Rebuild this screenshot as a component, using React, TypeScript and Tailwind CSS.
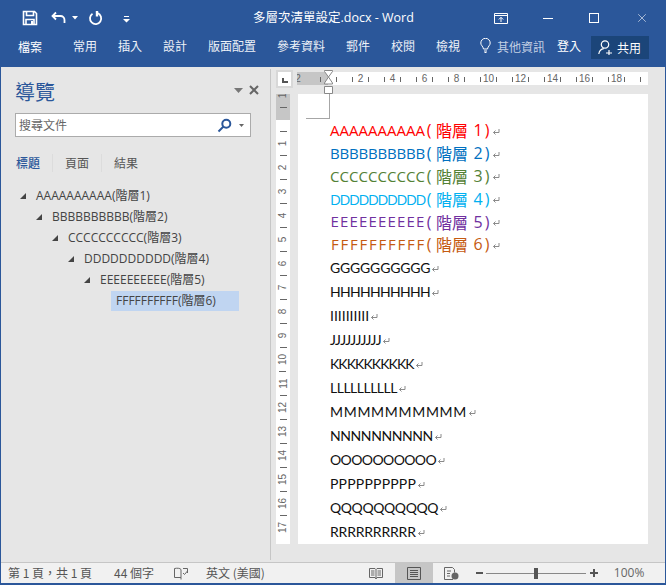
import { X } from "lucide-react";

const cjk = { fontFamily: '"Noto Sans CJK TC", "Noto Sans", sans-serif' };
const openSans = { fontFamily: '"Open Sans", "Noto Sans CJK TC", sans-serif' };
const rulerFont = { fontFamily: '"Liberation Sans", sans-serif' };

const tabs = [
  { label: "常用", w: "w-[45px]" },
  { label: "插入", w: "w-[45px]" },
  { label: "設計", w: "w-[45px]" },
  { label: "版面配置", w: "w-[69px]" },
  { label: "參考資料", w: "w-[69px]" },
  { label: "郵件", w: "w-[45px]" },
  { label: "校閱", w: "w-[45px]" },
  { label: "檢視", w: "w-[44px]" },
];

const tree = [
  { text: "AAAAAAAAAA(階層1)", pl: "pl-[19px]" },
  { text: "BBBBBBBBBB(階層2)", pl: "pl-[35px]" },
  { text: "CCCCCCCCCC(階層3)", pl: "pl-[51px]" },
  { text: "DDDDDDDDDD(階層4)", pl: "pl-[67px]" },
  { text: "EEEEEEEEEE(階層5)", pl: "pl-[83px]" },
];

const headings = [
  { text: "AAAAAAAAAA", n: "1", color: "text-[#ff0000]" },
  { text: "BBBBBBBBBB", n: "2", color: "text-[#0070c0]" },
  { text: "CCCCCCCCCC", n: "3", color: "text-[#538135]" },
  { text: "DDDDDDDDDD", n: "4", color: "text-[#00b0f0]" },
  { text: "EEEEEEEEEE", n: "5", color: "text-[#7030a0]" },
  { text: "FFFFFFFFFF", n: "6", color: "text-[#c55a11]" },
];

// Lato stands in for Calibri, so each line gets its own tracking
const body = [
  { text: "GGGGGGGGGG", track: "tracking-[-0.2px]" },
  { text: "HHHHHHHHHH", track: "tracking-[-0.7px]" },
  { text: "IIIIIIIIII", track: "tracking-[0px]" },
  { text: "JJJJJJJJJJ", track: "tracking-[-0.6px]" },
  { text: "KKKKKKKKKK", track: "tracking-[-0.9px]" },
  { text: "LLLLLLLLLL", track: "tracking-[-0.5px]" },
  { text: "MMMMMMMMMM", track: "tracking-[0.7px]" },
  { text: "NNNNNNNNNN", track: "tracking-[-0.4px]" },
  { text: "OOOOOOOOOO", track: "tracking-[-0.6px]" },
  { text: "PPPPPPPPPP", track: "tracking-[0.2px]" },
  { text: "QQQQQQQQQQ", track: "tracking-[-0.4px]" },
  { text: "RRRRRRRRRR", track: "tracking-[-0.2px]" },
];

const hLabels = ["2", "4", "6", "8", "10", "12", "14", "16", "18"];
const vLabels = ["", "1", "2", "3", "4", "5", "6", "7", "8", "9", "10", "11", "12", "13", "14", "15", "16", "17"];

function Arrow() {
  return (
    <svg width="8" height="8" viewBox="0 0 8 8" className="ml-[1px] mt-[3px] shrink-0" fill="none" stroke="#8a8a8a" strokeWidth="1">
      <path d="M7 1v3.500H1.500M3.500 2.500l-2 2 2 2" />
    </svg>
  );
}

function Heading({ text, n, color }: { text: string; n: string; color: string }) {
  return (
    <div className={`flex h-[22.8px] items-center text-[15px] ${color}`}>
      {text.split("").map((c, i) => (
        <span key={i} className="inline-block w-[9.5px] text-center" style={{ fontFamily: '"Open Sans", sans-serif' }}>
          {c}
        </span>
      ))}
      <span className="w-[8px] text-center text-[16px]">(</span>
      <span className="ml-[3px] text-[16px]" style={cjk}>階層</span>
      <span className="ml-[5px] w-[10px] text-center text-[16px]">{n}</span>
      <span className="w-[8px] text-center text-[16px]">)</span>
      <Arrow />
    </div>
  );
}

export default function App() {
  return (
    <div
      className="flex h-[585px] w-[666px] flex-col overflow-hidden border-x border-b-2 border-[#2b579a] bg-[#e6e6e6] text-[#444]"
      style={openSans}
    >
      {/* Title bar */}
      <div className="relative flex h-[36px] shrink-0 items-center bg-[#2b579a] text-white">
        <svg width="16" height="16" viewBox="0 0 16 16" className="ml-[21px]" fill="none" stroke="#fff" strokeWidth="1.6">
          <path d="M1.500 1.500h11l2 2v11h-13zM4.500 1.500v4h7v-4M4 14.500v-5h8v5" />
          <path d="M9 11h2v3.500H9z" fill="#fff" stroke="none" />
        </svg>
        <svg width="16" height="14" viewBox="0 0 16 14" className="ml-[13px]" fill="none" stroke="#fff" strokeWidth="1.8">
          <path d="M5 1.500 1.500 5 5 8.500M1.500 5h8a4 4 0 0 1 4 4v3" />
        </svg>
        <svg width="6" height="4" viewBox="0 0 6 4" className="ml-[5px]"><path d="M0 0h6L3 3.500z" fill="#fff" /></svg>
        <svg width="15" height="15" viewBox="0 0 15 15" className="ml-[10px]" fill="none" stroke="#fff" strokeWidth="1.8">
          <path d="M9.500 2.200a5.600 5.600 0 1 1-5 .6" />
          <path d="M9 0v5.500" strokeWidth="2.400" />
        </svg>
        <svg width="7" height="7" viewBox="0 0 7 7" className="ml-[20px] mt-[3px]" fill="#fff">
          <path d="M1 0h5v1H1zM0 3h7L3.500 6.500z" />
        </svg>
        <span className="absolute left-[252px] top-[9px] text-[12.5px] leading-[18px]">
          多層次清單設定.docx - Word
        </span>
        <div className="ml-auto flex items-center">
          <svg width="14" height="11" viewBox="0 0 14 11" className="mr-[35px]" fill="none" stroke="#fff">
            <path d="M.5.500h13v10H.5zM.5 2.500h13M7 9V4.500M4.800 6.500 7 4.300l2.200 2.200" />
          </svg>
          <span className="mr-[36px] h-px w-[10px] bg-white" />
          <span className="mr-[36px] h-[10px] w-[10px] border border-white" />
          <X size={14} strokeWidth={1} className="mr-[16px]" />
        </div>
      </div>

      {/* Ribbon tabs */}
      <div className="flex h-[31px] shrink-0 items-start bg-[#2b579a] text-[12px] text-white" style={cjk}>
        <span className="ml-[17px] mt-[2px] w-[55px] leading-[18px]">檔案</span>
        {tabs.map((t) => (
          <span key={t.label} className={`${t.w} mt-[1px] leading-[18px] text-[#eef2f8]`}>{t.label}</span>
        ))}
        <svg width="11" height="15" viewBox="0 0 11 15" className="mt-[2px]" fill="none" stroke="#fff">
          <path d="M3.500 11C3 8 .8 7.500.8 5a4.700 4.700 0 0 1 9.400 0c0 2.500-2.200 3-2.700 6zM4 13h3M4.500 14.500h2" />
        </svg>
        <span className="ml-[6px] mt-[2px] w-[60px] leading-[18px] text-[#c3d0e4]">其他資訊</span>
        <span className="mt-[1px] w-[34px] leading-[18px]">登入</span>
        <div className="flex h-[23px] w-[58px] items-center bg-[#1b4579] pl-[7px]">
          <svg width="15" height="15" viewBox="0 0 15 15" fill="none" stroke="#fff" strokeWidth="1.2">
            <circle cx="7" cy="4.500" r="3.700" />
            <path d="M.8 14c.5-3 2.500-5 5-5.300M8 13h6M11 10v5" />
          </svg>
          <span className="ml-[4px] leading-[18px]">共用</span>
        </div>
      </div>

      <div className="flex min-h-0 flex-1">
        {/* Navigation pane */}
        <div className="flex w-[269px] shrink-0 flex-col" style={cjk}>
          <div className="flex h-[46px] items-center pl-[14px] pr-[11px] pt-[4px]">
            <span className="text-[20px] leading-[28px] text-[#2b579a]">導覽</span>
            <svg width="9" height="5" viewBox="0 0 9 5" className="ml-auto mb-[4px]"><path d="M0 0h9L4.500 5z" fill="#777" /></svg>
            <svg width="10" height="10" viewBox="0 0 10 10" className="ml-[6px] mb-[4px]" stroke="#666" strokeWidth="2">
              <path d="M1 1l8 8M9 1l-8 8" />
            </svg>
          </div>
          <div className="ml-[14px] flex h-[24px] w-[236px] items-center border border-[#ababab] bg-white pl-[3px] pr-[6px]">
            <span className="text-[12px] text-[#666]">搜尋文件</span>
            <svg width="15" height="15" viewBox="0 0 15 15" className="ml-auto" fill="none" stroke="#2b579a" strokeWidth="2">
              <circle cx="9.300" cy="5.700" r="4" />
              <path d="M6.500 8.500 1.500 13.500" />
            </svg>
            <svg width="5" height="3" viewBox="0 0 5 3" className="ml-[7px]"><path d="M0 0h5L2.500 3z" fill="#666" /></svg>
          </div>
          <div className="mt-[16px] flex h-[20px] items-center pl-[15px] text-[12px] text-[#555]">
            <span className="w-[37px] border-r border-[#dcdcdc] font-medium text-[#2b579a]">標題</span>
            <span className="ml-[12px] w-[37px] border-r border-[#dcdcdc]">頁面</span>
            <span className="ml-[12px]">結果</span>
          </div>
          <div className="mt-[12px] flex flex-col">
            {tree.map((t) => (
              <div key={t.text} className={`flex h-[21px] items-center ${t.pl}`}>
                <svg width="6" height="6" viewBox="0 0 6 6"><path d="M6 0v6H0z" fill="#444" /></svg>
                <span className="ml-[10px] text-[12px]" style={openSans}>{t.text}</span>
              </div>
            ))}
            <div className="ml-[110px] mt-[1px] flex h-[20px] w-[128px] items-center bg-[#c0d5f1] pl-[5px]">
              <span className="text-[12px]" style={openSans}>FFFFFFFFFF(階層6)</span>
            </div>
          </div>
        </div>

        {/* Document area */}
        <div className="relative my-[2px] flex min-w-0 flex-1 border-l border-[#c6c6c6]">
          <div className="flex flex-1 flex-col pl-[5px]">
            {/* Corner + horizontal ruler */}
            <div className="flex h-[25px] shrink-0">
              <div className="mt-[1px] flex h-[18px] w-[17px] shrink-0 items-center justify-center border-2 border-[#d8d8d8] bg-white">
                <span className="mt-[2px] h-[5px] w-[6px] border-b-2 border-l-2 border-[#555]" />
              </div>
              <div className="ml-[4px] mt-[3px] flex h-[13px] w-[351px] overflow-hidden bg-[linear-gradient(90deg,#c6c6c6_31px,#fff_31px)]">
                <span className="-ml-[2px] w-[6px] shrink-0 text-center text-[10px] leading-[13px] text-[#666]" style={rulerFont}>2</span>
                <span className="ml-[19px] mt-[5px] h-[5px] w-px shrink-0 bg-[#666]" />
                <span className="w-[15px] shrink-0" />
                <span className="mt-[5px] h-[5px] w-px shrink-0 bg-[#666]" />
                <span className="w-[15px] shrink-0" />
                {hLabels.map((l) => (
                  <div key={l} className="flex w-[32px] shrink-0 items-start">
                    <span className="mt-[5px] h-[5px] w-px shrink-0 bg-[#666]" />
                    <span className="w-[15px] shrink-0 text-center text-[10px] leading-[13px] text-[#666]" style={rulerFont}>
                      {l}
                    </span>
                    <span className="mt-[5px] h-[5px] w-px shrink-0 bg-[#666]" />
                  </div>
                ))}
                <span className="mt-[5px] h-[5px] w-px shrink-0 bg-[#666]" />
              </div>
            </div>
            <div className="flex min-h-0 flex-1">
              {/* Vertical ruler */}
              <div className="mb-[16px] flex w-[14px] shrink-0 flex-col items-center overflow-hidden bg-[linear-gradient(#c6c6c6_26px,#fff_26px)]">
                <div className="h-[13px] shrink-0">
                  <span className="flex h-[13px] -translate-y-[5px] -rotate-90 items-center text-[10px] leading-none text-[#666]" style={rulerFont}>1</span>
                </div>
                {vLabels.map((l, i) => (
                  <div key={i} className="flex h-[24px] shrink-0 flex-col items-center">
                    <span className="h-px w-[7px] shrink-0 bg-[#666]" />
                    <span className="flex h-[23px] -rotate-90 items-center whitespace-nowrap text-[10px] leading-none text-[#666]" style={rulerFont}>
                      {l}
                    </span>
                  </div>
                ))}
              </div>
              {/* Page */}
              <div className="mb-[16px] ml-[8px] w-[350px] shrink-0 bg-white">
                <div className="ml-[8px] h-[25px] w-[24px] border-b border-r border-[#a6a6a6]" />
                <div className="pl-[32px]">
                  {headings.map((h) => (
                    <Heading key={h.text} {...h} />
                  ))}
                  <div className="text-[14px] text-[#111]">
                    {body.map((t) => (
                      <div key={t.text} className={`flex h-[24px] items-center ${t.track}`} style={{ fontFamily: '"Lato", sans-serif' }}>
                        {t.text}
                        <Arrow />
                      </div>
                    ))}
                  </div>
                </div>
              </div>
            </div>
          </div>
          {/* Indent markers on the ruler */}
          <svg width="9" height="24" viewBox="0 0 9 24" className="absolute left-[53px] top-[1px]" fill="#fff" stroke="#888">
            <path d="M.5.500h8v1L4.500 7 .5 1.500zM4.500 7l4 6v1h-8v-1zM.5 16.500h8v7h-8z" />
          </svg>
        </div>
      </div>

      {/* Status bar */}
      <div className="flex h-[21px] shrink-0 items-center border-t border-[#c6c6c6] bg-[#f1f1f1] text-[12px] text-[#555]" style={cjk}>
        <span className="ml-[7px] w-[106px]">第 1 頁，共 1 頁</span>
        <span className="w-[60px]">44 個字</span>
        <svg width="14" height="13" viewBox="0 0 14 13" fill="none" stroke="#666">
          <path d="M7 2.500C6 1 3 1 .5 1.500v9H7v2M7 2.500V10.500M9 1.500h4.500V6M9 6l1.500 1.500L13.500 4" />
        </svg>
        <span className="ml-[18px]">英文 (美國)</span>
        <svg width="14" height="13" viewBox="0 0 14 13" className="ml-[104px]" fill="none" stroke="#666">
          <path d="M.5 1.500h5.500l1 1 1-1h5.500v9H8l-1 1.500L6 10.500H.5zM7 2.500v9M2 4h3.500M2 6h3.500M2 8h3.500M8.500 4H12M8.500 6H12M8.500 8H12" />
        </svg>
        <div className="ml-[12px] flex h-full w-[38px] items-center justify-center bg-[#c6c6c6]">
          <svg width="14" height="13" viewBox="0 0 14 13" fill="none" stroke="#555">
            <path d="M.5.500h13v12H.5zM3 3.500h8M3 5.500h8M3 7.500h8M3 9.500h8" />
          </svg>
        </div>
        <svg width="15" height="13" viewBox="0 0 15 13" className="ml-[11px]" fill="none" stroke="#666">
          <path d="M9 12.500H.5V.500h8l2 2v3M3 4h4M3 6.500h3M3 9h3" />
          <circle cx="11" cy="9" r="3.500" fill="#666" stroke="none" />
        </svg>
        <span className="ml-[17px] h-[2px] w-[7px] bg-[#555]" />
        <div className="ml-[3px] flex h-[11px] w-[100px] items-center">
          <span className="h-px w-[48px] bg-[#888]" />
          <span className="h-[11px] w-[4px] bg-[#555]" />
          <span className="h-px w-[48px] bg-[#888]" />
        </div>
        <svg width="8" height="8" viewBox="0 0 8 8" className="ml-[4px]" fill="#555"><path d="M3 0h2v3h3v2H5v3H3V5H0V3h3z" /></svg>
        <span className="ml-[16px] text-[12px] text-[#666]" style={openSans}>100%</span>
      </div>
    </div>
  );
}
